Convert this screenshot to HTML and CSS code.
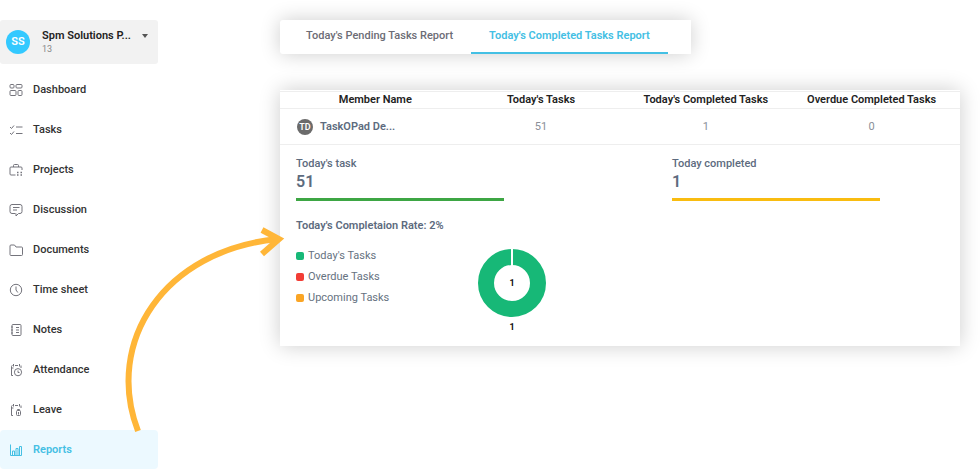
FILE: index.html
```html
<!DOCTYPE html>
<html lang="en">
<head>
    <meta charset="UTF-8">
    <meta name="viewport" content="width=device-width, initial-scale=1.0">
    <title>Today's Completed Tasks Report</title>
    <link rel="stylesheet" href="styles.css">
</head>
<body>
    <div class="layout">
        <aside class="sidebar">
            <button class="org" type="button">
                <span class="org-avatar">SS</span>
                <span class="org-text">
                    <span class="org-name">Spm Solutions P...</span>
                    <span class="org-count">13</span>
                </span>
                <span class="caret"></span>
            </button>
            <nav class="menu">
                <a class="menu-item" href="#">
                    <svg class="icon" viewBox="0 0 14 14"><rect x="1" y="1.5" width="4" height="3.5" rx="1"/><rect x="7" y="1.5" width="6" height="3.5" rx="1"/><rect x="1" y="7.5" width="6" height="5" rx="1"/><rect x="9" y="7.5" width="4" height="5" rx="1"/></svg>
                    Dashboard
                </a>
                <a class="menu-item" href="#">
                    <svg class="icon" viewBox="0 0 14 14"><path d="M1 4l1.500 1.500L5 2.500M1 10l1.500 1.500L5 8.500M7 4h6.500M7 10.500h6.500"/></svg>
                    Tasks
                </a>
                <a class="menu-item" href="#">
                    <svg class="icon" viewBox="0 0 14 14"><path d="M6.500 12H2a1 1 0 0 1-1-1V5a1 1 0 0 1 1-1h10a1 1 0 0 1 1 1v2M4.500 4V2.500a1 1 0 0 1 1-1h3a1 1 0 0 1 1 1V4"/><path class="dots" d="M8 9.500h1.500M11.500 9.500H13M8 12h1.500M11.500 12H13"/></svg>
                    Projects
                </a>
                <a class="menu-item" href="#">
                    <svg class="icon" viewBox="0 0 14 14"><path d="M6.500 10.500H3a2 2 0 0 1-2-2v-5a2 2 0 0 1 2-2h8a2 2 0 0 1 2 2v5a2 2 0 0 1-2 2H9.500L7 13v-2.500M4 4.500h6.500M4 7h4"/></svg>
                    Discussion
                </a>
                <a class="menu-item" href="#">
                    <svg class="icon" viewBox="0 0 14 14"><path d="M1 3a1 1 0 0 1 1-1h3.500L7 4h5.500a1 1 0 0 1 1 1v6.500a1 1 0 0 1-1 1H2a1 1 0 0 1-1-1z"/></svg>
                    Documents
                </a>
                <a class="menu-item" href="#">
                    <svg class="icon" viewBox="0 0 14 14"><circle cx="7" cy="7" r="5.700"/><path d="M7 3.500V7l1.800 2.500"/></svg>
                    Time sheet
                </a>
                <a class="menu-item" href="#">
                    <svg class="icon" viewBox="0 0 14 14"><path d="M3 2.500a1 1 0 0 1 1-1h7a1 1 0 0 1 1 1v9a1 1 0 0 1-1 1H4a1 1 0 0 1-1-1zM2 4h2M2 7h2M2 10h2M7 4.500h3M7 7h3M7 9.500h3"/></svg>
                    Notes
                </a>
                <a class="menu-item" href="#">
                    <svg class="icon" viewBox="0 0 14 14"><path d="M4 12.500H2.500v-9a1 1 0 0 1 1-1M4.500 1v2.500M6 2.500h3M10.500 1v2.500M12 2.500v2.500M2.500 5h2"/><circle cx="9" cy="9.200" r="3.600"/><path d="M9 7.500v2h1.500"/></svg>
                    Attendance
                </a>
                <a class="menu-item" href="#">
                    <svg class="icon" viewBox="0 0 14 14"><path d="M4 12.500H2.500v-9a1 1 0 0 1 1-1M4.500 1v2.500M6 2.500h3M10.500 1v2.500M12 2.500v2.500M2.500 5h2"/><rect x="7.500" y="7.500" width="4" height="5" rx="1"/><path d="M8.500 7.500v-1h2v1M9.500 9v2.500"/></svg>
                    Leave
                </a>
                <a class="menu-item active" href="#" aria-current="page">
                    <svg class="icon" viewBox="0 0 14 14"><path d="M1.500 1.500v11h11M3.500 12V8h2v4M7 12V5.500h2V12M10.500 12V3.500h2V12.500"/></svg>
                    Reports
                </a>
            </nav>
        </aside>

        <main class="content">
            <div class="tabs" role="tablist">
                <button class="tab" type="button" role="tab">Today's Pending Tasks Report</button>
                <button class="tab active" type="button" role="tab" aria-selected="true">Today's Completed Tasks Report</button>
            </div>

            <section class="report">
                <table class="members">
                    <thead>
                        <tr>
                            <th>Member Name</th>
                            <th>Today's Tasks</th>
                            <th>Today's Completed Tasks</th>
                            <th>Overdue Completed Tasks</th>
                        </tr>
                    </thead>
                    <tbody>
                        <tr>
                            <td>
                                <div class="member">
                                    <span class="member-avatar">TD</span>
                                    <span>TaskOPad De...</span>
                                </div>
                            </td>
                            <td>51</td>
                            <td>1</td>
                            <td>0</td>
                        </tr>
                    </tbody>
                </table>

                <div class="stats">
                    <div class="stat green">
                        <div class="stat-label">Today's task</div>
                        <div class="stat-value">51</div>
                    </div>
                    <div class="stat yellow">
                        <div class="stat-label">Today completed</div>
                        <div class="stat-value">1</div>
                    </div>
                </div>

                <div class="rate">Today's Completaion Rate: 2%</div>

                <div class="summary">
                    <ul class="legend">
                        <li><span class="swatch today"></span>Today's Tasks</li>
                        <li><span class="swatch overdue"></span>Overdue Tasks</li>
                        <li><span class="swatch upcoming"></span>Upcoming Tasks</li>
                    </ul>
                    <svg class="chart" viewBox="0 0 70 86" role="img" aria-label="Today's tasks: 1">
                        <circle class="ring" cx="35" cy="35" r="26"/>
                        <path class="split" d="M35 0v18"/>
                        <text x="35" y="38">1</text>
                        <text x="35" y="82">1</text>
                    </svg>
                </div>
            </section>
        </main>

        <!-- pointer from Reports to the report card -->
        <svg class="arrow" viewBox="0 0 170 216" aria-hidden="true">
            <path d="M18 211C-16 122 44 30 158 19"/>
            <path d="M142 10L159 19L142 34"/>
        </svg>
    </div>
</body>
</html>
```
FILE: styles.css
```css
* {
    box-sizing: border-box;
}
body {
    margin: 0;
    background: #fff;
    font-family: Roboto, "Liberation Sans", sans-serif;
    font-size: 11px;
    line-height: 16px;
    color: #333;
}
button {
    border: none;
    font: inherit;
    cursor: pointer;
}
.layout {
    position: relative;
    display: flex;
    gap: 122px;
    padding: 20px 20px 0 0;
}

/* sidebar */
.sidebar {
    flex: 0 0 158px;
}
.org {
    display: flex;
    align-items: center;
    width: 100%;
    height: 44px;
    padding: 0 10px 0 6px;
    background: #f2f2f2;
    border-radius: 3px;
    text-align: left;
}
.org-avatar {
    width: 24px;
    height: 24px;
    border-radius: 50%;
    background: #33c9ff;
    color: #fff;
    font-size: 11px;
    font-weight: 600;
    line-height: 24px;
    text-align: center;
}
.org-text {
    flex: 1;
    margin-left: 12px;
}
.org-name,
.org-count {
    display: block;
    line-height: 14px;
    white-space: nowrap;
}
.org-name {
    color: #222;
    font-weight: 600;
}
.org-count {
    color: #888;
    font-size: 9px;
    line-height: 12px;
}
.caret {
    margin-bottom: 12px;
    border: 3px solid transparent;
    border-top: 4px solid #555;
    border-bottom: 0;
}
.menu {
    display: flex;
    flex-direction: column;
    gap: 1px;
    margin-top: 6px;
}
.menu-item {
    display: flex;
    align-items: center;
    gap: 10px;
    height: 39px;
    padding-left: 9px;
    border-radius: 4px;
    color: #333;
    font-weight: 500;
    text-decoration: none;
}
.menu-item.active {
    background: #ecf9ff;
    color: #44c0e4;
    font-weight: 600;
}
.icon {
    width: 14px;
    height: 14px;
    fill: none;
    stroke: #74747c;
    stroke-width: 1;
}
.icon .dots {
    stroke-width: 1.5;
}
.active .icon {
    stroke: #44c0e4;
}

/* report area */
.content {
    flex: 1;
    min-width: 0;
}
.tabs,
.report {
    background: #fff;
    box-shadow: 0 0 20px rgba(0, 0, 0, 0.2);
}
.tabs {
    display: flex;
    width: fit-content;
    height: 34px;
    padding: 0 23px 0 8px;
    border-radius: 3px 0 0 3px;
}
.tab {
    padding: 0 18px;
    background: none;
    border-bottom: 2px solid transparent;
    color: #6c6c75;
    font-weight: 500;
}
.tab.active {
    border-color: #44c0e4;
    color: #44c0e4;
    font-weight: 600;
}
.report {
    margin-top: 36px;
    padding-top: 1px;
    padding-bottom: 12px;
}
.members {
    width: 100%;
    border-collapse: collapse;
    border-top: 1px solid #eee;
    table-layout: fixed;
}
.members th,
.members td {
    padding: 0;
    border-bottom: 1px solid #eee;
    text-align: center;
}
.members th {
    width: 24%;
    height: 16px;
    color: #222;
    font-weight: 600;
    white-space: nowrap;
}
.members th:first-child {
    width: 26%;
    padding-left: 12px;
}
.members th:last-child {
    width: 25%;
    padding-right: 5px;
}
.members td {
    height: 36px;
    color: #8a8f98;
}
.members td:last-child {
    padding-right: 5px;
}
.member {
    display: flex;
    align-items: center;
    gap: 7px;
    padding-left: 17px;
    color: #5d6b7e;
    font-weight: 600;
}
.member-avatar {
    width: 16px;
    height: 16px;
    border-radius: 50%;
    background: #6b6b6b;
    color: #fff;
    font-size: 9px;
    text-align: center;
}
.stats {
    display: grid;
    grid-template-columns: repeat(2, minmax(0, 208px));
    column-gap: 168px;
    padding: 11px 0 0 16px;
}
.stat {
    border-bottom: 3px solid;
    color: #5d6b7e;
}
.stat.green {
    border-color: #3da644;
}
.stat.yellow {
    border-color: #f9bc10;
}
.stat-label {
    font-weight: 500;
}
.stat-value {
    padding-bottom: 6px;
    font-size: 16px;
    font-weight: 600;
    line-height: 20px;
}
.rate {
    padding: 17px 16px 0;
    color: #5d6b7e;
    font-weight: 600;
}
.summary {
    display: flex;
    align-items: flex-start;
    padding: 14px 16px 0;
}
.legend {
    flex: 0 0 181px;
    display: grid;
    row-gap: 5px;
    margin: 0;
    padding: 0;
    color: #66727f;
    list-style: none;
}
.legend li {
    display: flex;
    align-items: center;
    gap: 4px;
}
.swatch {
    width: 8px;
    height: 8px;
    border-radius: 2px;
}
.swatch.today {
    background: #17b877;
}
.swatch.overdue {
    background: #f23d35;
}
.swatch.upcoming {
    background: #faa525;
}
.chart {
    width: 70px;
    height: 86px;
}
.ring {
    fill: none;
    stroke: #17b877;
    stroke-width: 16;
}
.split {
    stroke: #fff;
    stroke-width: 2;
}
.chart text {
    fill: #111;
    font-size: 9px;
    font-weight: 700;
    text-anchor: middle;
}
.arrow {
    position: absolute;
    top: 220px;
    left: 120px;
    width: 170px;
    height: 216px;
    fill: none;
    stroke: #ffb638;
    stroke-width: 6;
    pointer-events: none;
}
```
